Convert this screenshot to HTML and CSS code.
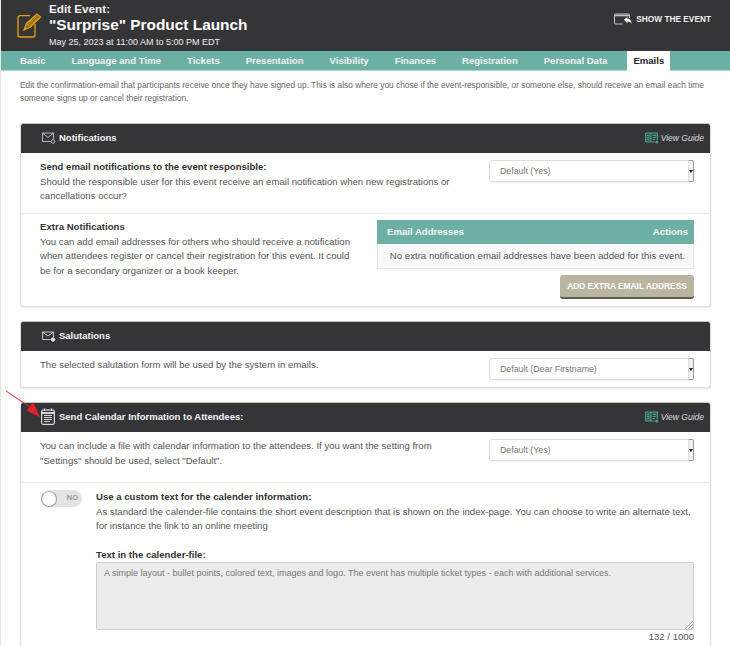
FILE: index.html
```html
<!DOCTYPE html>
<html lang="en">
  <head>
    <meta charset="UTF-8" />
    <meta name="viewport" content="width=device-width, initial-scale=1.0" />
    <title>Edit Event</title>
    <link rel="stylesheet" href="styles.css">
  </head>

  <body>
    <div class="page">
      <div class="top">
        <svg class="edit-icon" width="25" height="26" viewBox="0 0 25 26" fill="none" stroke="#e0a30c" stroke-width="1.300">
          <path d="M13 2.700H3a2 2 0 0 0-2 2V22a2 2 0 0 0 2 2h13a2 2 0 0 0 2-2V11" />
          <path d="M7 17l2.500-6.500L20 1l3.500 3L13.500 14z" fill="#8a6a1c" />
          <path d="M9.500 10.500l4 3.500M11.500 11l8-7.500M13 12.500l8-7.500" stroke-width="0.800" />
          <path d="M7 17l1-3 2 1.500z" fill="#e0a30c" stroke="none" />
        </svg>
        <div class="top-text">
          <div class="top-label">Edit Event:</div>
          <div class="top-name">"Surprise" Product Launch</div>
          <div class="top-date">May 25, 2023 at 11:00 AM to 5:00 PM EDT</div>
        </div>
        <div class="show-event">
          <svg width="18" height="13" viewBox="0 0 18 13" fill="none" stroke="#c4c4c4" stroke-width="1">
            <path d="M15.500 5V2a1 1 0 0 0-1-1H1.500a1 1 0 0 0-1 1v8a1 1 0 0 0 1 1h7" />
            <path d="M1 2.500h14" stroke-width="1.600" />
            <path d="M10 6.500L13.500 4v1.800c2.500 0 4 1.500 4 5-1-1.600-2-2.300-4-2.300v2z" fill="#fff" stroke="none" />
          </svg>
          SHOW THE EVENT
        </div>
      </div>

      <div class="tabs">
        <div class="tab">Basic</div>
        <div class="tab">Language and Time</div>
        <div class="tab">Tickets</div>
        <div class="tab">Presentation</div>
        <div class="tab">Visibility</div>
        <div class="tab">Finances</div>
        <div class="tab">Registration</div>
        <div class="tab">Personal Data</div>
        <div class="tab active">Emails</div>
      </div>

      <p class="intro">Edit the confirmation-email that participants receive once they have signed up. This is also where you chose if the event-responsible, or someone else, should receive an email each time someone signs up or cancel their registration.</p>

      <div class="card">
        <div class="card-head">
          <svg class="head-icon" width="14" height="12" viewBox="0 0 14 12" fill="none" stroke="#d8d8d8" stroke-width="0.800">
            <path d="M8.500 9.500H0.500V1h11v6" />
            <path d="M0.500 1l5.500 4.500L11.500 1" />
            <circle cx="11" cy="9.500" r="1.800" />
          </svg>
          <span class="head-title">Notifications</span>
          <span class="guide">
            <svg width="14" height="12" viewBox="0 0 14 12" fill="#2f5f58" stroke="#4f9c8f" stroke-width="1">
              <path d="M0.500 1h5.500v9H0.500zM6 1h6.500v7M6 10h4" />
              <path d="M2 3.500h2.500M2 5.500h2.500M2 7.500h2.500M7.500 3.500H11M7.500 5.500H11M7.500 7.500H10" />
              <circle cx="11.800" cy="10" r="1.500" fill="#4f9c8f" stroke="none" />
            </svg>
            <i>View Guide</i>
          </span>
        </div>
        <div class="row row-first">
          <div class="row-text">
            <b>Send email notifications to the event responsible:</b><br>
            Should the responsible user for this event receive an email notification when new registrations or cancellations occur?
          </div>
          <div class="select">Default (Yes)<span class="select-btn"></span></div>
        </div>
        <div class="row row-extra">
          <div class="extra-text">
            <b>Extra Notifications</b><br>
            You can add email addresses for others who should receive a notification when attendees register or cancel their registration for this event. It could be for a secondary organizer or a book keeper.
          </div>
          <div class="extra-side">
            <div class="table-head"><span>Email Addresses</span><span>Actions</span></div>
            <div class="table-empty">No extra notification email addresses have been added for this event.</div>
            <div class="add-btn">ADD EXTRA EMAIL ADDRESS</div>
          </div>
        </div>
      </div>

      <div class="card">
        <div class="card-head">
          <svg class="head-icon" width="14" height="12" viewBox="0 0 14 12" fill="none" stroke="#e8e8e8" stroke-width="0.800">
            <path d="M8.500 9.500H0.500V2h11v5" />
            <path d="M0.500 2l5.500 4L11.500 2" />
            <circle cx="11" cy="9.500" r="1.800" fill="#e8e8e8" />
          </svg>
          <span class="head-title">Salutations</span>
        </div>
        <div class="row row-salute">
          <div class="row-text">The selected salutation form will be used by the system in emails.</div>
          <div class="select">Default (Dear Firstname)<span class="select-btn"></span></div>
        </div>
      </div>

      <div class="card card-last">
        <svg class="arrow" width="36" height="30" viewBox="0 0 36 30">
          <path d="M0 1L24 17" stroke="#e8202a" stroke-width="1" />
          <path d="M34 27L20.700 20.700 27 12.300z" fill="#e8202a" />
        </svg>
        <div class="card-head">
          <svg class="head-icon cal-icon" width="14" height="17" viewBox="0 0 14 17" fill="none" stroke="#fff" stroke-width="1">
            <rect x="0.700" y="2" width="12.600" height="14.300" rx="1" />
            <path d="M0.700 5h12.600" stroke-width="1.600" />
            <path d="M3.500 0.500V3M10.500 0.500V3" />
            <path d="M3 7.500h8M3 9.500h8M3 11.500h8M3 13.500h6" stroke-width="0.800" />
          </svg>
          <span class="head-title">Send Calendar Information to Attendees:</span>
          <span class="guide">
            <svg width="14" height="12" viewBox="0 0 14 12" fill="#2f5f58" stroke="#4f9c8f" stroke-width="1">
              <path d="M0.500 1h5.500v9H0.500zM6 1h6.500v7M6 10h4" />
              <path d="M2 3.500h2.500M2 5.500h2.500M2 7.500h2.500M7.500 3.500H11M7.500 5.500H11M7.500 7.500H10" />
              <circle cx="11.800" cy="10" r="1.500" fill="#4f9c8f" stroke="none" />
            </svg>
            <i>View Guide</i>
          </span>
        </div>
        <div class="row row-calendar">
          <div class="row-text">You can include a file with calendar information to the attendees. If you want the setting from "Settings" should be used, select "Default".</div>
          <div class="select">Default (Yes)<span class="select-btn"></span></div>
        </div>
        <div class="custom">
          <div class="toggle"><span class="knob"></span><span class="toggle-no">NO</span></div>
          <div class="custom-body">
            <b>Use a custom text for the calender information:</b><br>
            As standard the calender-file contains the short event description that is shown on the index-page. You can choose to write an alternate text, for instance the link to an online meeting
            <div class="field-label"><b>Text in the calender-file:</b></div>
            <div class="textarea">
              A simple layout - bullet points, colored text, images and logo. The event has multiple ticket types - each with additional services.
              <svg class="grip" width="8" height="8" viewBox="0 0 8 8" stroke="#999" stroke-width="0.800">
                <path d="M0 8L8 0M3 8l5-5M6 8l2-2" />
              </svg>
            </div>
            <div class="counter">132 / 1000</div>
          </div>
        </div>
      </div>
    </div>
  </body>
</html>
```

FILE: styles.css
```css
* {
  margin: 0;
  padding: 0;
  box-sizing: border-box;
  font-family: 'Liberation Sans', Arial, sans-serif;
}

html,
body {
  height: 646px;
  overflow: hidden;
  background: #fff;
}

.page {
  height: 646px;
  border-left: 1px solid #e6e6df;
  overflow: hidden;
  color: #555;
  font-size: 9.600px;
}

.top {
  height: 51px;
  background: #353537;
  color: #fff;
  display: flex;
  align-items: center;
  padding: 0 19px 0 16px;
}

.edit-icon {
  margin-right: 7px;
}

.top-text {
  flex: 1;
  margin-top: -1px;
}

.top-label {
  font-size: 11.700px;
  font-weight: 700;
  line-height: 11px;
  color: #f2f2f2;
}

.top-name {
  font-size: 15.400px;
  font-weight: 700;
  line-height: 21px;
}

.top-date {
  font-size: 9px;
  line-height: 12px;
  color: #eee;
  margin-top: 1px;
}

.show-event {
  display: flex;
  align-items: center;
  gap: 4px;
  font-size: 8.300px;
  font-weight: 700;
  color: #eee;
  margin-top: -13px;
}

.tabs {
  height: 20px;
  background: #6cafa5;
  border-bottom: 1px solid #b7d6d1;
  display: flex;
  padding-left: 19px;
  gap: 26px;
}

.tab {
  font-size: 9.550px;
  font-weight: 700;
  color: #f1f1f1;
  line-height: 20px;
}

.tab.active {
  background: #fff;
  color: #222;
  padding: 0 6px;
  margin-left: -6px;
  height: 20px;
}

.intro {
  padding: 8px 20px 0 19px;
  height: 52px;
  font-size: 8.360px;
  line-height: 13px;
  color: #666;
}

.card {
  margin: 0 19px 14px;
  border: 1px solid #e2e0d8;
  border-top-color: #c9c6b8;
  border-radius: 3px;
  box-shadow: 0 1px 2px rgba(0, 0, 0, 0.1);
  background: #fff;
  position: relative;
}

.card-last {
  margin-bottom: 0;
  height: 300px;
}

.card-head {
  height: 29px;
  background: #353537;
  display: flex;
  align-items: center;
  padding: 0 6px 2px 21px;
  color: #f4f4f4;
  border-radius: 2px 2px 0 0;
}

.head-icon {
  margin-right: 3px;
}

.cal-icon {
  margin-left: -1px;
  margin-right: 4px;
}

.head-title {
  flex: 1;
  font-size: 9.500px;
  font-weight: 700;
}

.guide {
  display: flex;
  align-items: center;
  gap: 2px;
  font-size: 8.500px;
  color: #ddd;
}

.row {
  display: flex;
  justify-content: space-between;
  padding: 7px 16px 0 19px;
  line-height: 14.700px;
}

.row b,
.extra-text b,
.custom-body b {
  color: #333;
}

.row-text {
  width: 425px;
}

.row-first {
  height: 61px;
  border-bottom: 1px solid #eeeee9;
}

.row-salute {
  height: 36px;
}

.row-calendar {
  height: 51px;
  border-bottom: 1px solid #eeeee9;
}

.select {
  width: 205px;
  height: 22px;
  border: 1px solid #ddd;
  border-radius: 3px;
  padding-left: 10px;
  color: #777;
  font-size: 8.800px;
  line-height: 20px;
  position: relative;
  box-shadow: 0 1px 1px rgba(0, 0, 0, 0.05);
}

.select-btn {
  position: absolute;
  right: -1px;
  top: -1px;
  width: 6px;
  height: 22px;
  background: #f0f0f0;
  border: 1px solid #999;
  border-left: 1px solid #ddd;
  border-radius: 0 2px 2px 0;
}

.select-btn::after {
  content: '';
  position: absolute;
  left: 0;
  top: 9px;
  border-left: 2px solid transparent;
  border-right: 2px solid transparent;
  border-top: 3px solid #222;
}

.row-extra {
  padding: 6px 16px 0 19px;
  height: 92px;
}

.extra-text {
  width: 315px;
}

.extra-side {
  width: 317px;
  display: flex;
  flex-direction: column;
  align-items: flex-end;
}

.table-head {
  width: 100%;
  height: 24px;
  background: #6cafa5;
  color: #f4f4f4;
  font-size: 9.600px;
  font-weight: 700;
  display: flex;
  justify-content: space-between;
  align-items: center;
  padding: 0 6px 0 10px;
}

.table-empty {
  width: 100%;
  height: 25px;
  background: #f9f9f9;
  border: 1px solid #e6e6e6;
  border-top: 0;
  padding-left: 4px;
  text-align: center;
  line-height: 24px;
  font-size: 9.630px;
  color: #555;
}

.add-btn {
  margin-top: 6px;
  width: 134px;
  height: 24px;
  background: #bab5a0;
  border-bottom: 2px solid #5f5b4c;
  border-radius: 3px;
  color: #fff;
  font-size: 8.400px;
  font-weight: 700;
  text-align: center;
  line-height: 22px;
}

.custom {
  display: flex;
  padding: 7px 16px 0 20px;
  line-height: 14.700px;
}

.toggle {
  width: 41px;
  height: 17px;
  border-radius: 9px;
  background: #e3e3e3;
  display: flex;
  align-items: center;
  justify-content: space-between;
  margin-right: 14px;
  padding-right: 4px;
  flex-shrink: 0;
}

.knob {
  width: 16px;
  height: 16px;
  border-radius: 50%;
  background: #fff;
  border: 1px solid #999;
  border-top-color: #bbb;
}

.toggle-no {
  font-size: 7.500px;
  font-weight: 700;
  color: #999;
}

.custom-body {
  flex: 1;
}

.field-label {
  margin-top: 13.500px;
}

.textarea {
  height: 68px;
  background: #ececec;
  border: 1px solid #ccc;
  border-radius: 2px;
  padding: 3px 7px;
  color: #777;
  font-size: 9px;
  position: relative;
}

.grip {
  position: absolute;
  right: 0;
  bottom: 0;
}

.counter {
  text-align: right;
  color: #555;
  font-size: 9.600px;
}

.arrow {
  position: absolute;
  left: -15px;
  top: -13px;
  z-index: 2;
}
```
